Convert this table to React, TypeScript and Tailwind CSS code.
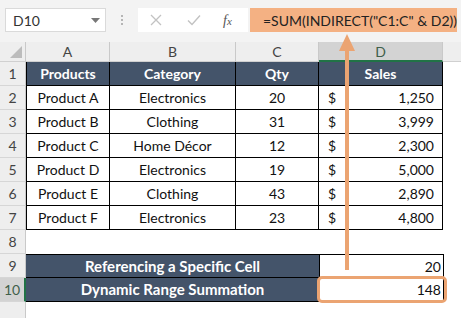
import React from "react";

const HEAD = "bg-[#44546a] text-white font-bold";

type Cells = React.ReactNode;

function RowHead({ n, active }: { n: number; active?: boolean }) {
  return (
    <div
      className={
        "w-[26px] shrink-0 h-full flex items-center justify-center text-[14px] border-b border-[#d6d6d6] " +
        (active
          ? "bg-[#d3d3d3] text-[#3f5f4a] border-r-2 border-r-[#217346]"
          : "bg-[#eeeeee] text-[#444] border-r border-r-[#c9c9c9]")
      }
    >
      {n}
    </div>
  );
}

function Row({ n, active, children }: { n: number; active?: boolean; children?: Cells }) {
  return (
    <div className="flex h-[24px]">
      <RowHead n={n} active={active} />
      {children}
    </div>
  );
}

const cA = "w-[84px] shrink-0 border-l border-r border-b border-black flex items-center justify-center";
const cB = "w-[126px] shrink-0 border-r border-b border-black flex items-center justify-center";
const cC = "w-[83px] shrink-0 border-r border-b border-black flex items-center justify-center";
const cD = "w-[124px] shrink-0 border-r border-b border-black flex items-center justify-between pl-[9px] pr-[8px]";

const data = [
  ["Product A", "Electronics", "20", "1,250"],
  ["Product B", "Clothing", "31", "3,999"],
  ["Product C", "Home Décor", "12", "2,300"],
  ["Product D", "Electronics", "19", "5,000"],
  ["Product E", "Clothing", "43", "2,890"],
  ["Product F", "Electronics", "23", "4,800"],
];

export default function App() {
  return (
    <div
      className="relative w-[461px] h-[318px] overflow-hidden bg-white text-[#111]"
      style={{ fontFamily: "Lato, 'Liberation Sans', sans-serif" }}
    >
      {/* formula bar */}
      <div className="h-[42px] bg-[#f3f3f3] flex items-start pt-[8px] pl-[5px]">
        <div className="w-[101px] h-[24px] bg-white border border-[#dadada] flex items-center justify-between pl-[7px] pr-[5px] text-[14px] text-[#333]">
          <span>D10</span>
          <svg width="9" height="5" viewBox="0 0 9 5">
            <path d="M0 0 H9 L4.5 5 Z" fill="#777" />
          </svg>
        </div>
        <div className="w-[32px] h-[24px] flex flex-col items-center justify-center gap-[2px]">
          <span className="w-[2px] h-[2px] bg-[#b5b5b5]" />
          <span className="w-[2px] h-[2px] bg-[#b5b5b5]" />
          <span className="w-[2px] h-[2px] bg-[#b5b5b5]" />
        </div>
        <div className="w-[110px] h-[24px] bg-white flex items-center">
          <svg width="12" height="12" viewBox="0 0 12 12" className="ml-[12px]">
            <path d="M1 1 L11 11 M11 1 L1 11" stroke="#c2c2c2" strokeWidth="1.3" />
          </svg>
          <svg width="14" height="12" viewBox="0 0 14 12" className="ml-[25px]">
            <path d="M1 6.5 L5 10.5 L13 1.5" stroke="#c2c2c2" strokeWidth="1.4" fill="none" />
          </svg>
          <span
            className="ml-[22px] text-[14px] italic text-[#555]"
            style={{ fontFamily: "'Liberation Serif', serif" }}
          >
            f<span className="text-[11px]">x</span>
          </span>
        </div>
        <div className="ml-[2px] w-[207px] h-[24px] bg-[#f4b183] flex items-center pl-[13px] text-[14px] text-[#222]">
          =SUM(INDIRECT("C1:C" &amp; D2))
        </div>
      </div>

      {/* column headers */}
      <div className="flex h-[20px] bg-[#eeeeee] text-[14px] text-[#444]">
        <div className="relative w-[26px] shrink-0 border-r border-[#c9c9c9] border-b border-b-[#d0d0d0]">
          <svg width="12" height="12" viewBox="0 0 12 12" className="absolute right-[3px] bottom-[3px]">
            <path d="M12 0 V12 H0 Z" fill="#bcbcbc" />
          </svg>
        </div>
        <div className="w-[84px] shrink-0 border-r border-[#c9c9c9] border-b border-b-[#d0d0d0] flex items-center justify-center">A</div>
        <div className="w-[126px] shrink-0 border-r border-[#c9c9c9] border-b border-b-[#d0d0d0] flex items-center justify-center">B</div>
        <div className="w-[83px] shrink-0 border-r border-[#c9c9c9] border-b border-b-[#d0d0d0] flex items-center justify-center">C</div>
        <div className="w-[124px] shrink-0 bg-[#d3d3d3] border-r border-[#c9c9c9] border-b-2 border-b-[#217346] flex items-center justify-center text-[#3f5f4a]">D</div>
        <div className="flex-1 border-b border-b-[#d0d0d0]" />
      </div>

      {/* sheet */}
      <Row n={1}>
        <div className={cA + " text-[14px] " + HEAD}>Products</div>
        <div className={cB + " text-[14px] " + HEAD}>Category</div>
        <div className={cC + " text-[14px] " + HEAD}>Qty</div>
        <div className={"w-[124px] shrink-0 border-r border-b border-black flex items-center justify-center text-[14px] " + HEAD}>Sales</div>
      </Row>
      {data.map((r, i) => (
        <Row key={r[0]} n={i + 2}>
          <div className={cA + " text-[14px]"}>{r[0]}</div>
          <div className={cB + " text-[14px]"}>{r[1]}</div>
          <div className={cC + " text-[14px]"}>{r[2]}</div>
          <div className={cD + " text-[14px]"}>
            <span>$</span>
            <span>{r[3]}</span>
          </div>
        </Row>
      ))}
      <Row n={8} />
      <Row n={9}>
        <div className={"w-[293px] shrink-0 border-t border-b border-black flex items-center justify-center text-[15px] " + HEAD}>
          Referencing a Specific Cell
        </div>
        <div className="w-[125px] shrink-0 border border-black flex items-center justify-end pr-[2px] text-[14px]">20</div>
      </Row>
      <Row n={10} active>
        <div className={"w-[293px] shrink-0 border-b border-black flex items-center justify-center text-[15px] " + HEAD}>
          Dynamic Range Summation
        </div>
        <div className="w-[125px] shrink-0 border-l border-r border-b border-black flex items-center justify-end pr-[2px] text-[14px]">148</div>
      </Row>
      <div className="flex h-[20px]">
        <div className="w-[26px] shrink-0 bg-[#eeeeee] border-r border-[#c9c9c9]" />
      </div>

      {/* callout arrow from the result cell to the formula */}
      <svg
        className="absolute left-[337px] top-[33px] pointer-events-none"
        width="20"
        height="240"
        viewBox="0 0 20 240"
      >
        <path d="M10 1 L18 18 L12 18 L12 237 L8 237 L8 18 L2 18 Z" fill="#eba472" />
      </svg>
      <div className="absolute left-[317px] top-[276px] w-[130px] h-[27px] rounded-[5px] border-[3px] border-[#eba472] pointer-events-none" />
    </div>
  );
}
